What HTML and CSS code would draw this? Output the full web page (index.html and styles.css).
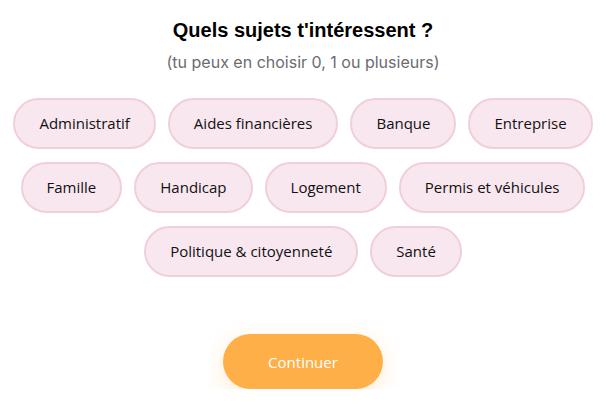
FILE: index.html
```html
<!DOCTYPE html>
<html lang="fr">
<head>
    <meta charset="UTF-8">
    <meta name="viewport" content="width=device-width, initial-scale=1.0">
    <title>Sujets</title>
    <link rel="stylesheet" href="styles.css">
</head>
<body>
    <div class="page">
        <h1>Quels sujets t'intéressent ?</h1>
        <p class="hint">(tu peux en choisir 0, 1 ou plusieurs)</p>

        <div class="topics">
            <button class="topic">Administratif</button>
            <button class="topic">Aides financières</button>
            <button class="topic">Banque</button>
            <button class="topic">Entreprise</button>
            <button class="topic">Famille</button>
            <button class="topic">Handicap</button>
            <button class="topic">Logement</button>
            <button class="topic">Permis et véhicules</button>
            <button class="topic">Politique &amp; citoyenneté</button>
            <button class="topic">Santé</button>
        </div>

        <button class="continue">Continuer</button>
    </div>
</body>
</html>
```

FILE: styles.css
```css
body {
    margin: 0;
    background: #fff;
    font-family: "Open Sans", Arial, sans-serif;
    color: #111;
}
.page {
    display: flex;
    flex-direction: column;
    align-items: center;
    padding: 18px 6px 0;
}
h1 {
    font-family: "Liberation Sans", Arial, sans-serif;
    font-size: 20px;
    font-weight: bold;
    margin: 0;
    line-height: 24px;
    color: #000;
}
.hint {
    font-family: Inter, "Liberation Sans", sans-serif;
    font-size: 16px;
    color: #6b6b72;
    margin: 10px 0 0;
    line-height: 20px;
}
.topics {
    display: flex;
    flex-wrap: wrap;
    justify-content: center;
    gap: 13px 12px;
    margin-top: 26px;
}
.topic {
    font-family: "Open Sans", sans-serif;
    font-size: 15px;
    line-height: 19px;
    color: #111;
    background: #f8e7ef;
    border: 2px solid #f0cfdc;
    border-radius: 999px;
    padding: 14px 24px;
    cursor: pointer;
}
.continue {
    margin-top: 57px;
    width: 160px;
    height: 55px;
    border: none;
    border-radius: 999px;
    background: #ffaf47;
    color: #fff;
    font-family: "Open Sans", sans-serif;
    font-size: 15px;
    box-shadow: 0 6px 20px rgba(255, 175, 71, 0.25);
    cursor: pointer;
}
```
